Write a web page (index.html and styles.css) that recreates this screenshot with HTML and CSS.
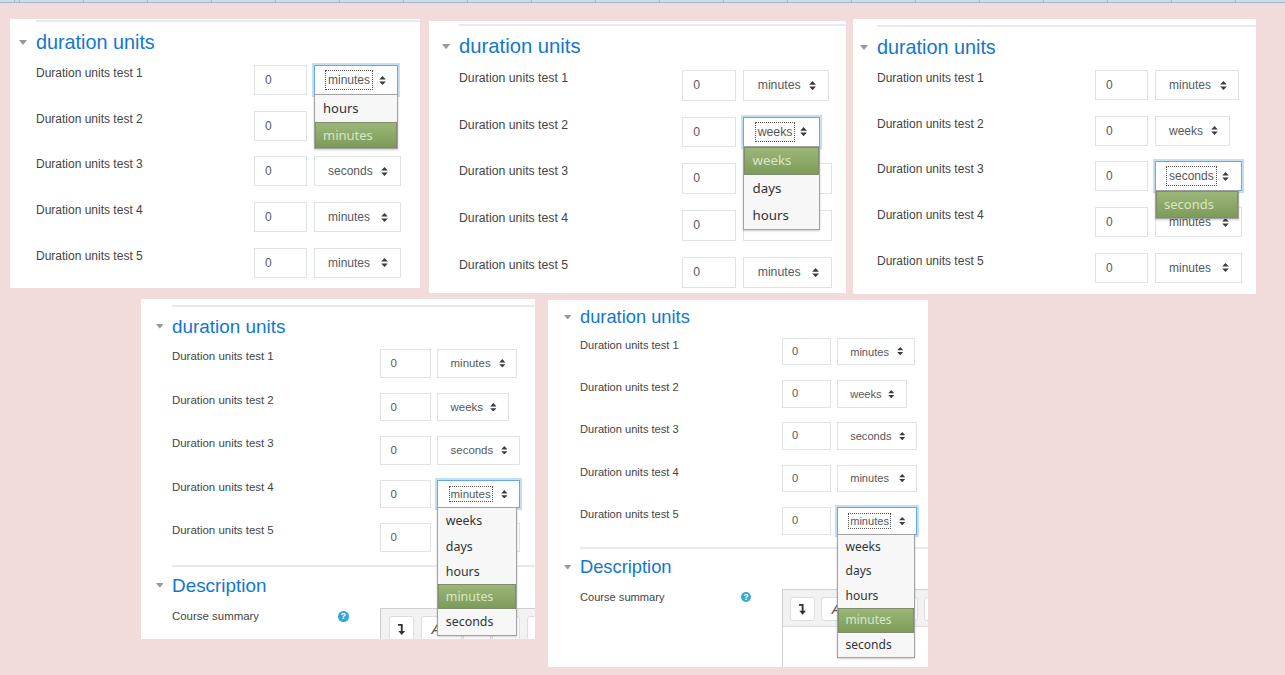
FILE: index.html
```html
<!DOCTYPE html>
<html lang="en">
<head>
<meta charset="utf-8">
<title>Duration units</title>
<link rel="stylesheet" href="styles.css">
</head>
<body>
<svg class="defs" width="0" height="0" aria-hidden="true">
  <symbol id="updown" viewBox="0 0 7 9"><path d="M3.5 0L6.8 3.6H.2ZM3.5 9L.2 5.4H6.8Z"/></symbol>
  <symbol id="fold" viewBox="0 0 8 5"><path d="M0 0H8L4 5Z"/></symbol>
  <symbol id="expand" viewBox="0 0 10 13"><path d="M1 1H6V8.5H8.6L5 12.6 1.4 8.5H4V3H1Z"/></symbol>
</svg>
<div class="topbar"></div>
<main class="canvas">

  <section class="shot shot-1">
    <div class="rule"></div>
    <h3 class="legend"><svg class="fold"><use href="#fold"/></svg>duration units</h3>
    <div class="rows">
      <div class="row"><div class="label">Duration units test 1</div><div class="num">0</div>
        <div class="sel sel-mid is-focused"><span class="val">minutes</span><svg class="updown"><use href="#updown"/></svg>
          <ul class="menu"><li>hours</li><li class="on">minutes</li></ul>
        </div></div>
      <div class="row"><div class="label">Duration units test 2</div><div class="num">0</div><div class="sel sel-narrow"><span class="val">weeks</span><svg class="updown"><use href="#updown"/></svg></div></div>
      <div class="row"><div class="label">Duration units test 3</div><div class="num">0</div><div class="sel"><span class="val">seconds</span><svg class="updown"><use href="#updown"/></svg></div></div>
      <div class="row"><div class="label">Duration units test 4</div><div class="num">0</div><div class="sel"><span class="val">minutes</span><svg class="updown"><use href="#updown"/></svg></div></div>
      <div class="row"><div class="label">Duration units test 5</div><div class="num">0</div><div class="sel"><span class="val">minutes</span><svg class="updown"><use href="#updown"/></svg></div></div>
    </div>
  </section>

  <section class="shot shot-2">
    <div class="rule"></div>
    <h3 class="legend"><svg class="fold"><use href="#fold"/></svg>duration units</h3>
    <div class="rows">
      <div class="row"><div class="label">Duration units test 1</div><div class="num">0</div><div class="sel sel-mid"><span class="val">minutes</span><svg class="updown"><use href="#updown"/></svg></div></div>
      <div class="row"><div class="label">Duration units test 2</div><div class="num">0</div>
        <div class="sel sel-narrow is-focused"><span class="val">weeks</span><svg class="updown"><use href="#updown"/></svg>
          <ul class="menu menu-narrow"><li class="on">weeks</li><li>days</li><li>hours</li></ul>
        </div></div>
      <div class="row"><div class="label">Duration units test 3</div><div class="num">0</div><div class="sel"><span class="val">seconds</span><svg class="updown"><use href="#updown"/></svg></div></div>
      <div class="row"><div class="label">Duration units test 4</div><div class="num">0</div><div class="sel"><span class="val">minutes</span><svg class="updown"><use href="#updown"/></svg></div></div>
      <div class="row"><div class="label">Duration units test 5</div><div class="num">0</div><div class="sel"><span class="val">minutes</span><svg class="updown"><use href="#updown"/></svg></div></div>
    </div>
  </section>

  <section class="shot shot-3">
    <div class="rule"></div>
    <h3 class="legend"><svg class="fold"><use href="#fold"/></svg>duration units</h3>
    <div class="rows">
      <div class="row"><div class="label">Duration units test 1</div><div class="num">0</div><div class="sel sel-mid"><span class="val">minutes</span><svg class="updown"><use href="#updown"/></svg></div></div>
      <div class="row"><div class="label">Duration units test 2</div><div class="num">0</div><div class="sel sel-narrow"><span class="val">weeks</span><svg class="updown"><use href="#updown"/></svg></div></div>
      <div class="row"><div class="label">Duration units test 3</div><div class="num">0</div>
        <div class="sel is-focused"><span class="val">seconds</span><svg class="updown"><use href="#updown"/></svg>
          <ul class="menu"><li class="on">seconds</li></ul>
        </div></div>
      <div class="row"><div class="label">Duration units test 4</div><div class="num">0</div><div class="sel"><span class="val">minutes</span><svg class="updown"><use href="#updown"/></svg></div></div>
      <div class="row"><div class="label">Duration units test 5</div><div class="num">0</div><div class="sel"><span class="val">minutes</span><svg class="updown"><use href="#updown"/></svg></div></div>
    </div>
  </section>

  <section class="shot shot-4">
    <div class="rule"></div>
    <h3 class="legend"><svg class="fold"><use href="#fold"/></svg>duration units</h3>
    <div class="rows">
      <div class="row"><div class="label">Duration units test 1</div><div class="num">0</div><div class="sel sel-mid"><span class="val">minutes</span><svg class="updown"><use href="#updown"/></svg></div></div>
      <div class="row"><div class="label">Duration units test 2</div><div class="num">0</div><div class="sel sel-narrow"><span class="val">weeks</span><svg class="updown"><use href="#updown"/></svg></div></div>
      <div class="row"><div class="label">Duration units test 3</div><div class="num">0</div><div class="sel"><span class="val">seconds</span><svg class="updown"><use href="#updown"/></svg></div></div>
      <div class="row"><div class="label">Duration units test 4</div><div class="num">0</div>
        <div class="sel is-focused"><span class="val">minutes</span><svg class="updown"><use href="#updown"/></svg>
          <ul class="menu"><li>weeks</li><li>days</li><li>hours</li><li class="on">minutes</li><li>seconds</li></ul>
        </div></div>
      <div class="row"><div class="label">Duration units test 5</div><div class="num">0</div><div class="sel"><span class="val">minutes</span><svg class="updown"><use href="#updown"/></svg></div></div>
    </div>
    <div class="section-2">
      <div class="rule"></div>
      <h3 class="legend legend-2"><svg class="fold"><use href="#fold"/></svg>Description</h3>
      <div class="row">
        <div class="label">Course summary<span class="help">?</span></div>
        <div class="editor">
          <div class="toolbar">
            <span class="tool tool-first"><svg class="expand"><use href="#expand"/></svg></span>
            <span class="tool tool-font">A</span><span class="tool tool-a"></span><span class="tool tool-b"></span>
            <span class="tool tool-next"></span>
          </div>
        </div>
      </div>
    </div>
  </section>

  <section class="shot shot-5">
    <div class="rule"></div>
    <h3 class="legend"><svg class="fold"><use href="#fold"/></svg>duration units</h3>
    <div class="rows">
      <div class="row"><div class="label">Duration units test 1</div><div class="num">0</div><div class="sel sel-mid"><span class="val">minutes</span><svg class="updown"><use href="#updown"/></svg></div></div>
      <div class="row"><div class="label">Duration units test 2</div><div class="num">0</div><div class="sel sel-narrow"><span class="val">weeks</span><svg class="updown"><use href="#updown"/></svg></div></div>
      <div class="row"><div class="label">Duration units test 3</div><div class="num">0</div><div class="sel"><span class="val">seconds</span><svg class="updown"><use href="#updown"/></svg></div></div>
      <div class="row"><div class="label">Duration units test 4</div><div class="num">0</div><div class="sel"><span class="val">minutes</span><svg class="updown"><use href="#updown"/></svg></div></div>
      <div class="row"><div class="label">Duration units test 5</div><div class="num">0</div>
        <div class="sel is-focused"><span class="val">minutes</span><svg class="updown"><use href="#updown"/></svg>
          <ul class="menu"><li>weeks</li><li>days</li><li>hours</li><li class="on">minutes</li><li>seconds</li></ul>
        </div></div>
    </div>
    <div class="section-2">
      <div class="rule"></div>
      <h3 class="legend legend-2"><svg class="fold"><use href="#fold"/></svg>Description</h3>
      <div class="row">
        <div class="label">Course summary<span class="help">?</span></div>
        <div class="editor">
          <div class="toolbar">
            <span class="tool tool-first"><svg class="expand"><use href="#expand"/></svg></span>
            <span class="tool tool-font">A</span><span class="tool tool-a"></span><span class="tool tool-b"></span>
            <span class="tool tool-next"></span>
          </div>
        </div>
      </div>
    </div>
  </section>

</main>
</body>
</html>
```
FILE: styles.css
```css
* { box-sizing: border-box; }

html, body {
  margin: 0;
  height: 100%;
  overflow: hidden;
}

body {
  background: #f2dcdb;
  font-family: "Liberation Sans", Arial, sans-serif;
}

.defs { position: absolute; }

.topbar {
  height: 3px;
  background-color: #cfdcec;
  background-image: repeating-linear-gradient(90deg, #a9b8cc 0 1px, transparent 1px 64px);
  background-position: 19px 0;
  border-bottom: 1px solid #a3b6d0;
}

.canvas { position: relative; height: 672px; }

/* each screenshot pasted on the free canvas */
.shot {
  --s: 1;
  --after-legend: 1.5px;
  position: absolute;
  overflow: hidden;
  background: #fff;
  padding-left: var(--inset);
}

.shot-1 { --s: 1;     --inset: 26px; --top: 1px;  left: 10px;  top: 16px;  width: 410px; height: 269px; }
.shot-2 { --s: 1.023; --inset: 30px; --top: 3px;  left: 429px; top: 18px;  width: 417px; height: 272px; }
.shot-3 { --s: 1;     --inset: 24px; --top: 6px;  left: 853px; top: 16px;  width: 403px; height: 275px; }
.shot-4 { --s: .954;  --inset: 31px; --top: 6px;  --after-legend: 2.5px; left: 141px; top: 296px; width: 394px; height: 340px; }
.shot-5 { --s: .925;  --inset: 32px; --top: -4px; left: 548px; top: 297px; width: 380px; height: 367px; }

.rule {
  height: 1.5px;
  margin-top: var(--top);
  background: #e6e9ed;
}

.legend {
  display: flex;
  align-items: center;
  margin: 0 0 calc(var(--after-legend) * var(--s));
  height: calc(42px * var(--s));
  font-size: calc(19.8px * var(--s));
  font-weight: 400;
  color: #1177d1;
  white-space: nowrap;
}

.fold {
  flex: none;
  width: calc(8px * var(--s));
  height: calc(5px * var(--s));
  margin-left: calc(-17px * var(--s));
  margin-right: calc(9px * var(--s));
  fill: #999;
}

.rows {
  display: flex;
  flex-direction: column;
  gap: calc(15.7px * var(--s));
}

.row { display: flex; align-items: flex-start; }

.label {
  flex: none;
  display: flex;
  justify-content: space-between;
  align-items: center;
  width: calc(218px * var(--s));
  padding-right: calc(33px * var(--s));
  font-size: calc(12px * var(--s));
  line-height: calc(16px * var(--s));
  color: #444;
  white-space: nowrap;
}

.num {
  flex: none;
  width: calc(53px * var(--s));
  height: calc(30px * var(--s));
  margin-right: calc(7px * var(--s));
  padding-left: calc(10px * var(--s));
  border: 1px solid #dfe3e8;
  font-size: calc(12px * var(--s));
  line-height: calc(28px * var(--s));
  color: #55595c;
}

.sel {
  flex: none;
  position: relative;
  display: flex;
  align-items: center;
  justify-content: space-between;
  width: calc(86.5px * var(--s));
  height: calc(30px * var(--s));
  padding: 0 calc(11.5px * var(--s)) 0 calc(13px * var(--s));
  border: 1px solid #dfe3e8;
  background: #fff;
  font-size: calc(12px * var(--s));
  color: #55595c;
}

.sel-mid { width: calc(84px * var(--s)); }
.sel-narrow { width: calc(75px * var(--s)); }

.updown {
  flex: none;
  width: calc(7px * var(--s));
  height: calc(9px * var(--s));
  fill: #3a3d40;
}

.is-focused {
  border-color: #66a8e6;
  box-shadow: 0 0 0 2px rgba(102, 175, 233, .4);
}

.is-focused .val {
  outline: 1px dotted #555;
  outline-offset: calc(2px * var(--s));
}

/* open GTK popup over the form */
.menu {
  position: absolute;
  z-index: 2;
  left: -1px;
  top: 100%;
  width: calc(84px * var(--s));
  margin: 0;
  padding: 0;
  list-style: none;
  background: #f7f7f7;
  border: 1px solid #a2a2a2;
  box-shadow: 0 1px 2px rgba(0, 0, 0, .2);
  font-family: "Noto Sans", "Open Sans", sans-serif;
  font-size: calc(13px * var(--s));
  color: #2e3436;
}

.menu-narrow { width: calc(74.5px * var(--s)); }

.menu li {
  height: calc(26.5px * var(--s));
  line-height: calc(26.5px * var(--s));
  padding-left: calc(8px * var(--s));
}

.menu .on {
  background: linear-gradient(#9db87a, #7b9a57);
  box-shadow: inset 0 0 0 1px #7f8c6e;
  color: #d9e6c9;
}

.section-2 { margin-top: calc(14px * var(--s)); }
.section-2 .rule { margin-top: 0; }
.legend-2 { height: calc(40px * var(--s)); margin-bottom: calc(4px * var(--s)); }

.help {
  flex: none;
  width: calc(11px * var(--s));
  height: calc(11px * var(--s));
  border-radius: 50%;
  background: #3ba7cf;
  color: #fff;
  font-size: calc(9px * var(--s));
  font-weight: 700;
  line-height: calc(11px * var(--s));
  text-align: center;
}

.editor {
  flex: none;
  width: calc(400px * var(--s));
  height: calc(200px * var(--s));
  margin-top: -1px;
  border: 1px solid #cfcfcf;
  background: #fff;
}

.toolbar {
  display: flex;
  align-items: flex-start;
  height: calc(40px * var(--s));
  padding: calc(8px * var(--s)) 0 0 calc(8px * var(--s));
  background: #f2f2f2;
  border-bottom: 1px solid #dcdcdc;
}

.tool {
  flex: none;
  display: flex;
  align-items: center;
  justify-content: center;
  height: calc(26px * var(--s));
  background: #fff;
  border: 1px solid #dedede;
  border-radius: 3px;
}

.tool-first { width: calc(27px * var(--s)); margin-right: calc(7px * var(--s)); }
.tool-font {
  width: calc(43px * var(--s));
  margin-right: calc(1px * var(--s));
  justify-content: flex-start;
  padding-left: calc(10px * var(--s));
  font-size: calc(16px * var(--s));
  font-style: italic;
  color: #555;
}
.tool-a { width: calc(29px * var(--s)); margin-right: calc(1px * var(--s)); }
.tool-b { width: calc(30px * var(--s)); margin-right: calc(7px * var(--s)); }
.tool-next { width: calc(27px * var(--s)); }

.expand {
  width: calc(10px * var(--s));
  height: calc(13px * var(--s));
  fill: #333;
}
```
